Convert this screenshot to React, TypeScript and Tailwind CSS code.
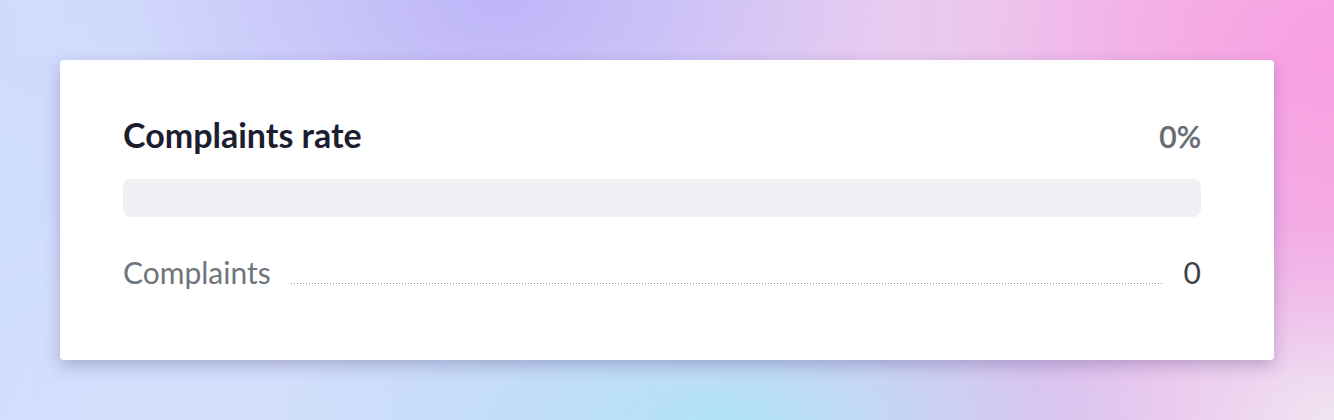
export default function App() {
  return (
    <div
      className="relative h-[420px] w-[1334px] overflow-hidden bg-[#d6dafb] p-[60px] bg-[radial-gradient(ellipse_380px_240px_at_500px_0px,#bdb5f8_0%,transparent_100%),radial-gradient(ellipse_360px_320px_at_1334px_60px,#f8a0e2_0%,transparent_100%),radial-gradient(ellipse_460px_180px_at_720px_420px,#b0e3f9_0%,transparent_100%),radial-gradient(ellipse_420px_260px_at_200px_420px,#d2e0fc_0%,transparent_100%),radial-gradient(ellipse_400px_320px_at_0px_200px,#cedcfd_0%,transparent_100%),radial-gradient(ellipse_300px_200px_at_1334px_420px,#f0e4f2_0%,transparent_100%),radial-gradient(ellipse_500px_300px_at_1120px_420px,#e6b6ec_0%,transparent_100%),linear-gradient(90deg,#d0dafd_0%,#dcd3f6_45%,#ecc6ee_75%,#f3b4e6_100%)]"
      style={{ fontFamily: 'Lato, "Open Sans", sans-serif' }}
    >
      <div className="flex h-[300px] w-full flex-col rounded-[4px] bg-white pl-[63px] pr-[73px] pt-[55px] shadow-[0_6px_16px_rgba(60,50,110,0.28)]">
        {/* Header */}
        <div className="flex items-baseline justify-between">
          <h2 className="text-[34px] font-bold leading-[40px] text-[#1c1d2e]">Complaints rate</h2>
          <span className="text-[30px] font-semibold leading-[40px] text-[#666c74] [-webkit-text-stroke:0.25px_#666c74]">
            0%
          </span>
        </div>

        {/* Progress bar */}
        <div className="mt-[23px] h-[38px] w-full rounded-lg bg-[#eff0f4]" />

        {/* Detail row */}
        <div className="mt-[37px] flex items-baseline">
          <span className="text-[30px] leading-[36px] text-[#6f757c]">Complaints</span>
          <div className="ml-5 mr-[22px] h-px flex-1 bg-[linear-gradient(to_right,#92969c_1px,transparent_1px)] bg-[length:3px_1px]" />
          <span className="text-[30px] leading-[36px] text-[#3e4249]">0</span>
        </div>
      </div>
    </div>
  );
}
